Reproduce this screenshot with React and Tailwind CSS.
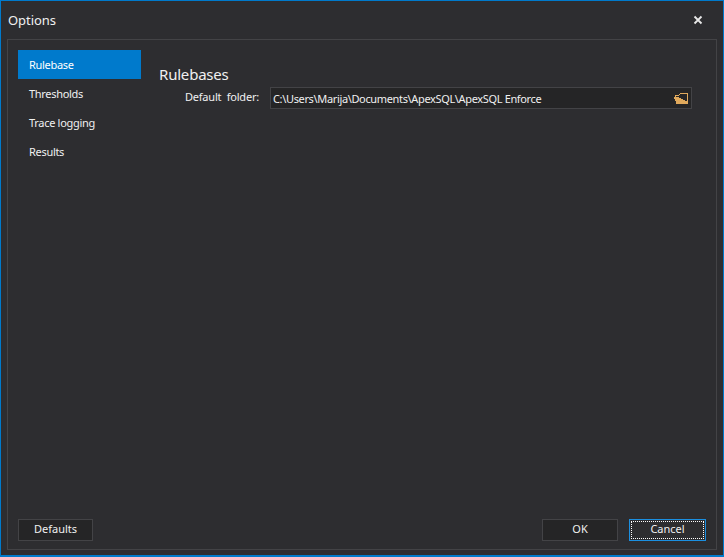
import React from "react";

function Btn({ children, className = "" }) {
  return (
    <button className={`h-[22px] flex items-center justify-center pb-[1px] text-[11px] text-[#f0f0f0] ${className}`}>
      {children}
    </button>
  );
}

export default function App() {
  const items = ["Rulebase", "Thresholds", "Trace logging", "Results"];
  return (
    <div className="w-[724px] h-[557px] box-border border border-[#007acc] border-b-2 bg-[#2d2d30] flex flex-col overflow-hidden font-['Noto_Sans','Open_Sans',sans-serif] text-[#f0f0f0]">
      <div className="h-[38px] shrink-0 flex items-center justify-between pl-[7px] pr-[20px]">
        <span className="text-[13px] leading-none pt-[1px] tracking-[-0.05px]">Options</span>
        <svg width="10" height="10" viewBox="0 0 10 10" className="mt-[-1px]">
          <path d="M1.5 1.5 L8.5 8.5 M8.5 1.5 L1.5 8.5" stroke="#e8e8e8" strokeWidth="1.8" />
        </svg>
      </div>
      <div className="ml-[6px] mr-[6px] mb-[5px] flex-1 border border-[#434346] flex flex-col pt-[10px] pl-[10px] pr-[10px] pb-[8px]">
        <div className="flex flex-1">
          <div className="w-[123px] shrink-0 flex flex-col">
            {items.map((t, i) => (
              <div
                key={t}
                className={`h-[29px] flex items-center pl-[11px] pt-[2px] text-[11px] tracking-[-0.3px] ${i === 0 ? "bg-[#007acc] text-white" : "text-[#f0f0f0]"}`}
              >
                {t}
              </div>
            ))}
          </div>
          <div className="flex-1 pl-[18px] pr-[14px] pt-[14px]">
            <div className="text-[15px] leading-[20px] tracking-[-0.2px] text-[#f0f0f0]">Rulebases</div>
            <div className="flex items-center mt-[3px]">
              <span className="w-[111px] text-right pr-[11px] pb-[1px] shrink-0 text-[11px] tracking-[-0.2px] whitespace-pre">Default  folder:</span>
              <div className="flex-1 h-[22px] bg-[#252526] border border-[#434346] flex items-center justify-between pl-[2px] pr-[3px]">
                <span className="text-[11px] leading-none tracking-[-0.35px] pt-[1px]">C:\Users\Marija\Documents\ApexSQL\ApexSQL Enforce</span>
                <svg width="14" height="11" viewBox="0 0 14 11" shapeRendering="crispEdges" className="mt-[1px]">
                  <path d="M5 1 H6 V0 H14 V11 H13 V1 H6 V2 H5 Z" fill="#e0a95c" />
                  <path d="M1 2 H5 V3 H2 V4 H5 V5 H7 V6 H9 V7 H11 V8 H13 V11 H2 V8 H1 V6 H0 V4 H1 Z" fill="#e0a95c" />
                </svg>
              </div>
            </div>
          </div>
        </div>
        <div className="flex items-center">
          <Btn className="w-[75px] bg-[#252526] border border-[#434346]">Defaults</Btn>
          <div className="flex-1" />
          <Btn className="w-[76px] bg-[#252526] border border-[#434346]">OK</Btn>
          <button className="ml-[11px] w-[77px] h-[22px] border border-[#1b8fe0] bg-[#2d2d30] p-px flex">
            <span className="flex-1 flex items-center justify-center pb-[1px] border border-dotted border-white text-[11px] text-[#f0f0f0]">Cancel</span>
          </button>
        </div>
      </div>
    </div>
  );
}
